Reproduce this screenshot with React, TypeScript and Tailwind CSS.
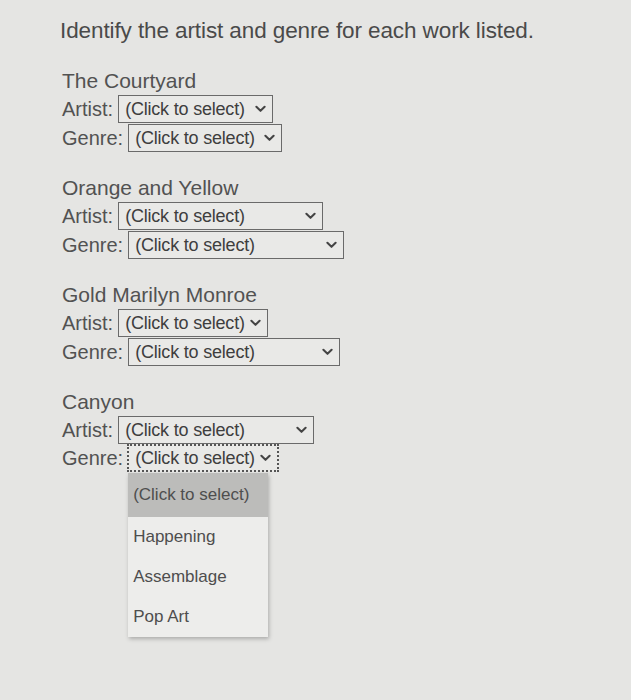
import React from 'react';

type SelectProps = {
  width: string;
  focused?: boolean;
};

const Chevron = () => (
  <svg viewBox="0 0 12 8" className="h-[8px] w-[11px] shrink-0" fill="none">
    <path d="M1.5 1.5 L6 6 L10.5 1.5" stroke="#444" strokeWidth="2.2" strokeLinecap="round" strokeLinejoin="round" />
  </svg>
);

const FakeSelect: React.FC<SelectProps> = ({ width, focused = false }) => (
  <div
    className={`flex h-[28px] items-center justify-between pl-[6px] pr-[6px] bg-[#e9e9e7] ${width} ${
      focused ? 'border-2 border-dotted border-[#555]' : 'border border-[#6a6a6a]'
    }`}
  >
    <span className="text-[18px] leading-none text-[#3e3e3e] tracking-[-0.2px]">(Click to select)</span>
    <Chevron />
  </div>
);

type Work = {
  title: string;
  artistW: string;
  genreW: string;
};

const works: Work[] = [
  { title: 'The Courtyard', artistW: 'w-[155px]', genreW: 'w-[154px]' },
  { title: 'Orange and Yellow', artistW: 'w-[205px]', genreW: 'w-[216px]' },
  { title: 'Gold Marilyn Monroe', artistW: 'w-[150px]', genreW: 'w-[212px]' },
];

const Row: React.FC<{ label: string; children: React.ReactNode }> = ({ label, children }) => (
  <div className="flex items-center h-[29px]">
    <span className="text-[20px] leading-none text-[#525252]">{label}</span>
    <div className="ml-[5px]">{children}</div>
  </div>
);

export default function App() {
  return (
    <div
      className="min-h-[700px] w-full bg-[#e5e5e3] pl-[60px] pt-[17px]"
      style={{ fontFamily: '"Liberation Sans", Arial, sans-serif' }}
    >
      <h1 className="text-[22.5px] leading-[28px] text-[#4a4a4a] tracking-[-0.1px]">
        Identify the artist and genre for each work listed.
      </h1>

      <div className="mt-[23px] flex flex-col gap-[23px] pl-[2px]">
        {works.map((w) => (
          <div key={w.title} className="flex flex-col">
            <div className="text-[21px] leading-[26px] text-[#525252]">{w.title}</div>
            <Row label="Artist:">
              <FakeSelect width={w.artistW} />
            </Row>
            <Row label="Genre:">
              <FakeSelect width={w.genreW} />
            </Row>
          </div>
        ))}

        <div className="flex flex-col">
          <div className="text-[21px] leading-[26px] text-[#525252]">Canyon</div>
          <Row label="Artist:">
            <FakeSelect width="w-[196px]" />
          </Row>
          <div className="flex items-start h-[29px]">
            <span className="text-[20px] leading-[29px] text-[#525252]">Genre:</span>
            <div className="relative ml-[4px]">
              <FakeSelect width="w-[152px]" focused />
              <div className="absolute left-[1px] top-[29px] w-[140px] bg-[#ededeb] shadow-[1px_2px_4px_rgba(0,0,0,0.25)]">
                <div className="flex h-[44px] items-center bg-[#bcbcba] pl-[5px] text-[17px] text-[#4e4e4e]">
                  (Click to select)
                </div>
                <div className="flex h-[40px] items-center pl-[5px] text-[17px] text-[#4e4e4e]">Happening</div>
                <div className="flex h-[40px] items-center pl-[5px] text-[17px] text-[#4e4e4e]">Assemblage</div>
                <div className="flex h-[40px] items-center pl-[5px] text-[17px] text-[#4e4e4e]">Pop Art</div>
              </div>
            </div>
          </div>
        </div>
      </div>
    </div>
  );
}
